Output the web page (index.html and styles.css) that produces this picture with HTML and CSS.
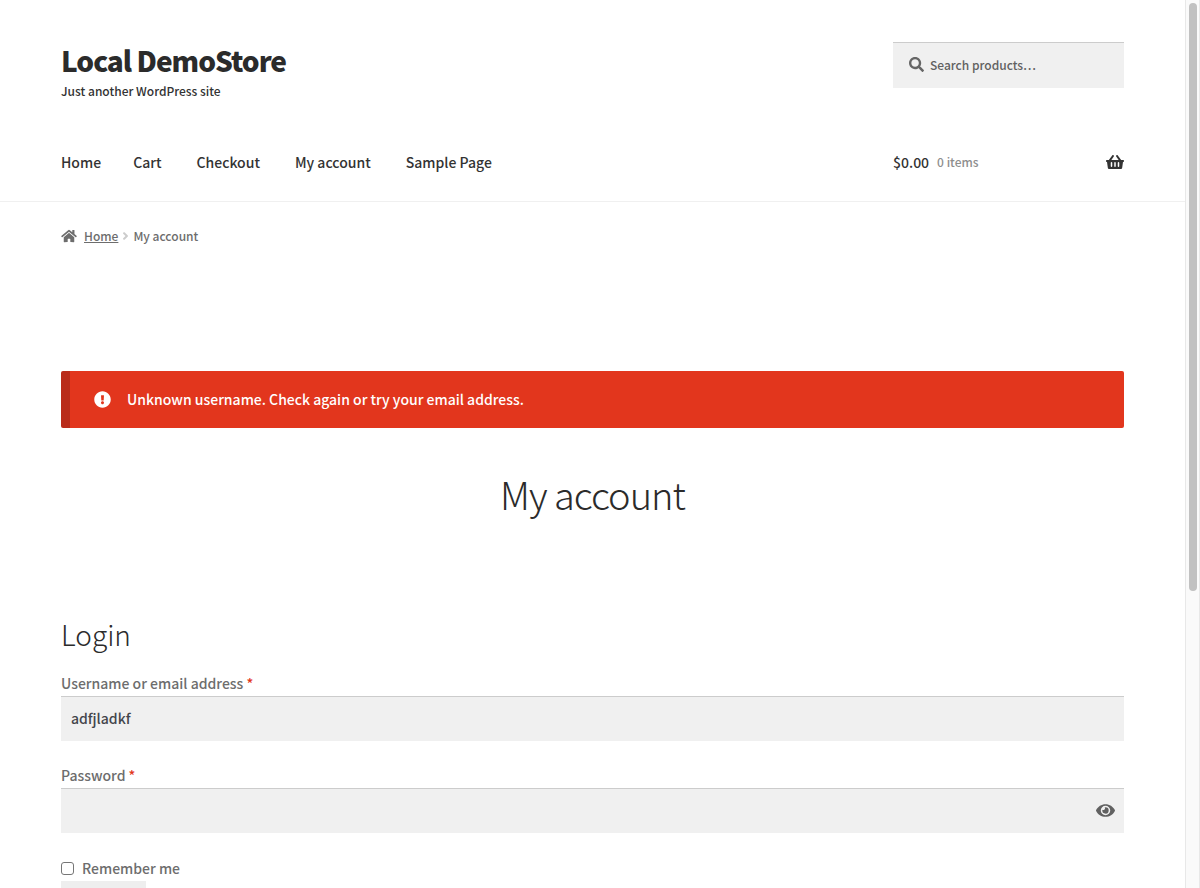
FILE: index.html
```html
<!DOCTYPE html>
<html lang="en">
<head>
<meta charset="utf-8">
<meta name="viewport" content="width=device-width, initial-scale=1">
<title>My account – Local DemoStore</title>
<link rel="stylesheet" href="styles.css">
</head>
<body>
<div class="viewport">
  <div class="page">
    <header class="site-header">
      <div class="container header-top">
        <div class="branding">
          <a class="site-title" href="#">Local DemoStore</a>
          <p class="site-description">Just another WordPress site</p>
        </div>
        <form class="search" role="search">
          <svg class="search-icon" viewBox="0 0 512 512" aria-hidden="true"><path d="M505 442.700L405.300 343c-4.500-4.500-10.600-7-17-7H372c27.600-35.300 44-79.700 44-128C416 93.100 322.900 0 208 0S0 93.100 0 208s93.100 208 208 208c48.300 0 92.700-16.400 128-44v16.300c0 6.400 2.500 12.500 7 17l99.700 99.700c9.400 9.400 24.600 9.400 33.900 0l28.300-28.300c9.400-9.400 9.400-24.600.1-34zM208 336c-70.700 0-128-57.200-128-128 0-70.700 57.200-128 128-128 70.700 0 128 57.200 128 128 0 70.700-57.200 128-128 128z"/></svg>
          <input class="search-input" type="search" placeholder="Search products…" aria-label="Search products">
        </form>
      </div>
      <div class="container header-nav">
        <nav class="main-nav" aria-label="Primary">
          <a href="#">Home</a>
          <a href="#">Cart</a>
          <a href="#">Checkout</a>
          <a href="#">My account</a>
          <a href="#">Sample Page</a>
        </nav>
        <a class="cart" href="#">
          <span class="cart-amount">$0.00</span>
          <span class="cart-count">0 items</span>
          <svg class="cart-icon" viewBox="0 0 576 512" aria-hidden="true"><path d="M576 216v16c0 13.255-10.745 24-24 24h-8l-26.113 182.788C514.509 462.435 494.257 480 470.370 480H105.630c-23.887 0-44.139-17.565-47.518-41.212L32 256h-8c-13.255 0-24-10.745-24-24v-16c0-13.255 10.745-24 24-24h67.341l106.780-146.821c10.395-14.292 30.407-17.453 44.701-7.058 14.293 10.395 17.453 30.408 7.058 44.701L170.477 192h235.046L326.120 82.821c-10.395-14.292-7.234-34.306 7.059-44.701 14.291-10.395 34.306-7.235 44.701 7.058L484.659 192H552c13.255 0 24 10.745 24 24zM312 392V280c0-13.255-10.745-24-24-24s-24 10.745-24 24v112c0 13.255 10.745 24 24 24s24-10.745 24-24zm112 0V280c0-13.255-10.745-24-24-24s-24 10.745-24 24v112c0 13.255 10.745 24 24 24s24-10.745 24-24zm-224 0V280c0-13.255-10.745-24-24-24s-24 10.745-24 24v112c0 13.255 10.745 24 24 24s24-10.745 24-24z"/></svg>
        </a>
      </div>
    </header>
    <main class="container">
      <nav class="breadcrumb" aria-label="Breadcrumb">
        <svg class="home-icon" viewBox="0 0 576 512" aria-hidden="true"><path d="M280.370 148.260L96 300.110V464a16 16 0 0 0 16 16l112.060-.29a16 16 0 0 0 15.920-16V368a16 16 0 0 1 16-16h64a16 16 0 0 1 16 16v95.640a16 16 0 0 0 16 16.050L464 480a16 16 0 0 0 16-16V300L295.670 148.260a12.190 12.190 0 0 0-15.300 0zM571.600 251.470L488 182.560V44.050a12 12 0 0 0-12-12h-56a12 12 0 0 0-12 12v72.610L318.470 43a48 48 0 0 0-61 0L4.340 251.470a12 12 0 0 0-1.600 16.900l25.500 31A12 12 0 0 0 45.150 301l235.220-193.740a12.190 12.190 0 0 1 15.300 0L530.900 301a12 12 0 0 0 16.900-1.600l25.500-31a12 12 0 0 0-1.700-16.930z"/></svg>
        <a href="#">Home</a>
        <svg class="angle-icon" viewBox="24 96 208 320" aria-hidden="true"><path d="M224.300 273l-136 136c-9.400 9.400-24.600 9.400-33.900 0l-22.600-22.600c-9.400-9.400-9.400-24.600 0-33.900l96.400-96.400-96.400-96.400c-9.400-9.400-9.400-24.600 0-33.900L54.300 103c9.400-9.400 24.600-9.400 33.900 0l136 136c9.500 9.400 9.500 24.600.1 34z"/></svg>
        <span>My account</span>
      </nav>
      <div class="notice" role="alert">
        <svg class="notice-icon" viewBox="0 0 512 512" aria-hidden="true"><path d="M504 256c0 136.997-111.043 248-248 248S8 392.997 8 256C8 119.083 119.043 8 256 8s248 111.083 248 248zm-248 50c-25.405 0-46 20.595-46 46s20.595 46 46 46 46-20.595 46-46-20.595-46-46-46zm-43.673-165.346l7.418 136c.347 6.364 5.609 11.346 11.982 11.346h48.546c6.373 0 11.635-4.982 11.982-11.346l7.418-136c.375-6.874-5.098-12.654-11.982-12.654h-63.383c-6.884 0-12.356 5.780-11.981 12.654z"/></svg>
        <span>Unknown username. Check again or try your email address.</span>
      </div>
      <h1 class="page-title">My account</h1>
      <h2 class="section-title">Login</h2>
      <form class="login">
        <div class="field">
          <label for="username">Username or email address <span class="required">*</span></label>
          <input class="text-input" id="username" type="text" value="adfjladkf">
        </div>
        <div class="field">
          <label for="password">Password <span class="required">*</span></label>
          <div class="password-box">
            <input class="text-input" id="password" type="password">
            <button class="reveal" type="button" aria-label="Show password">
              <svg viewBox="0 0 576 512" aria-hidden="true"><path d="M572.520 241.400C518.290 135.590 410.930 64 288 64S57.680 135.640 3.480 241.410a32.350 32.350 0 0 0 0 29.190C57.710 376.410 165.070 448 288 448s230.320-71.640 284.520-177.410a32.350 32.350 0 0 0 0-29.190zM288 400a144 144 0 1 1 144-144 143.930 143.930 0 0 1-144 144zm0-240a95.310 95.310 0 0 0-25.310 3.790 47.850 47.850 0 0 1-66.900 66.900A95.780 95.780 0 1 0 288 160z"/></svg>
            </button>
          </div>
        </div>
        <label class="remember"><input type="checkbox"><span>Remember me</span></label>
        <button class="submit" type="submit">Log in</button>
      </form>
    </main>
  </div>
  <div class="scrollbar" aria-hidden="true"><div class="scroll-thumb"></div></div>
</div>
</body>
</html>
```
FILE: styles.css
```css
* { box-sizing: border-box; }

body {
  margin: 0;
  background: #fff;
  color: #6d6d6d;
  font: 500 14px/24px "Noto Sans CJK SC", "Noto Sans", sans-serif;
}

a { color: inherit; text-decoration: none; }
svg { display: block; fill: currentColor; flex: none; }
p, h1, h2 { margin: 0; }
input, button { font: inherit; color: inherit; border-radius: 0; }

.viewport { display: flex; height: 100vh; overflow: hidden; }
.page { flex: 1; min-width: 0; overflow: hidden; }

.scrollbar {
  flex: none;
  width: 15px;
  padding: 3px;
  background: #fafafa;
  border: solid #e8e8e8;
  border-width: 0 1px;
}
.scroll-thumb { width: 8px; height: 588px; max-height: 100%; border-radius: 4px; background: #c1c1c1; }

.container { max-width: 1143px; margin: 0 auto; padding: 0 40px; }

.site-header { padding-top: 42px; border-bottom: 1px solid #f0f0f0; color: #333; }
.header-top, .header-nav { display: flex; justify-content: space-between; }
.header-top { height: 98px; }
.site-title {
  display: block;
  color: #2b2b2b;
  font-size: 28px;
  line-height: 36px;
  font-weight: 900;
  letter-spacing: -1px;
}
.site-description { font-size: 12px; line-height: 26px; }

.search {
  display: flex;
  align-items: center;
  width: 231px;
  height: 46px;
  padding: 0 16px 2px;
  gap: 6px;
  background: #f0f0f0;
  border-top: 1px solid #ccc;
  color: #666;
}
.search-icon { width: 15px; height: 15px; }
.search-input {
  flex: 1;
  min-width: 0;
  padding: 0;
  border: 0;
  outline: 0;
  background: none;
  font-size: 12px;
  appearance: none;
}
.search-input::placeholder { color: #616161; opacity: 1; }

.header-nav { align-items: center; padding-top: 10px; padding-bottom: 27px; }
.main-nav { display: flex; gap: 35px; }
.main-nav a:first-child { margin-right: -3px; }
.cart { display: flex; align-items: center; width: 231px; gap: 8px; }
.cart-count { font-size: 12px; color: #8e8e8e; }
.cart-icon { width: 18px; height: 16px; margin-left: auto; }

.breadcrumb { display: flex; align-items: center; padding: 22px 0; font-size: 12px; }
.breadcrumb a { text-decoration: underline; margin: 0 5px 0 7px; }
.home-icon { width: 16px; height: 14px; }
.angle-icon { width: 5px; height: 8px; margin-right: 5px; color: #ccc; }

.notice {
  display: flex;
  align-items: center;
  gap: 16px;
  min-height: 57px;
  margin-top: 101px;
  padding: 15px 24px 16px;
  border-left: 9px solid #b92c1b;
  border-radius: 2px;
  background: #e2361d;
  color: #fff;
}
.notice-icon { width: 17px; height: 17px; }

.page-title {
  margin-top: 40px;
  color: #2b2b2b;
  font-size: 38px;
  line-height: 52px;
  font-weight: 300;
  letter-spacing: -1px;
  text-align: center;
}
.section-title {
  margin-top: 95px;
  color: #2b2b2b;
  font-size: 28px;
  line-height: 38px;
  font-weight: 300;
}
.login { padding-top: 19px; }
.field { margin-bottom: 23px; }
.field label { display: block; line-height: 22px; padding-bottom: 2px; }
.required { color: #e2361d; }
.text-input {
  display: block;
  width: 100%;
  height: 45px;
  padding: 0 10px 2px;
  border: 0;
  border-top: 1px solid #ccc;
  outline: 0;
  background: #f0f0f0;
  color: #43454b;
}
.password-box { position: relative; }
.reveal {
  position: absolute;
  top: 0;
  right: 9px;
  height: 100%;
  padding: 0;
  border: 0;
  background: none;
  color: #616161;
}
.reveal svg { width: 19px; height: 17px; }
.remember { display: flex; align-items: center; gap: 8px; margin-bottom: 1px; }
.remember input {
  width: 13px;
  height: 13px;
  margin: 0;
  border: 1px solid #767676;
  border-radius: 3px;
  background: #fff;
  appearance: none;
}
.remember input:checked { background: #666; }
.submit {
  padding: 12px 22px;
  border: 0;
  background: #eee;
  color: #333;
  font-weight: 700;
}
```
